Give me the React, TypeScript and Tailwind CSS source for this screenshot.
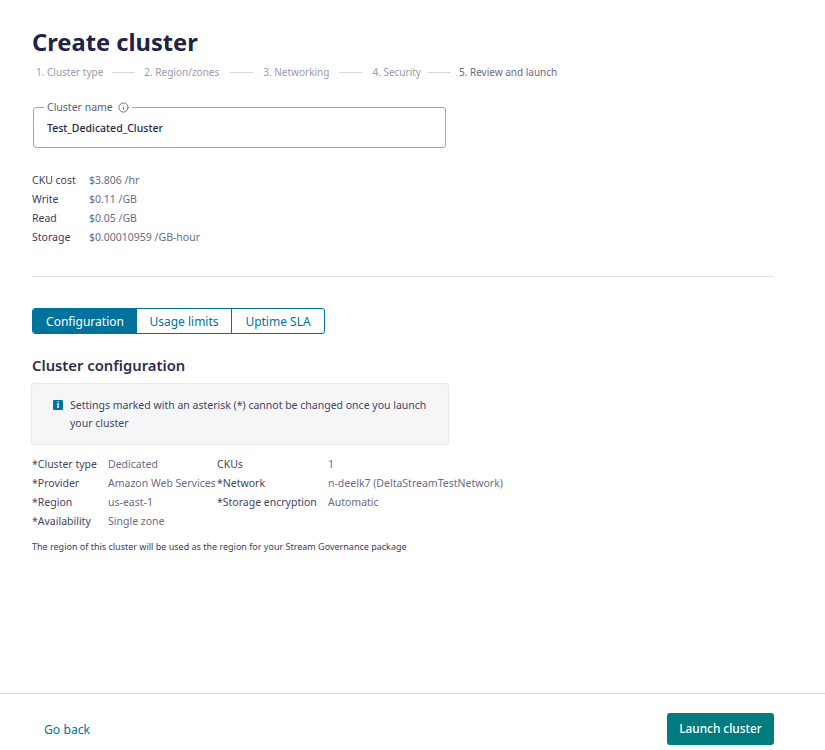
import { Info } from "lucide-react";

const steps = [
  { label: "1. Cluster type", gap: "w-[41px]" },
  { label: "2. Region/zones", gap: "w-[44px]" },
  { label: "3. Networking", gap: "w-[43px]" },
  { label: "4. Security", gap: "w-[38px]" },
];

const costs = [
  ["CKU cost", "$3.806 /hr"],
  ["Write", "$0.11 /GB"],
  ["Read", "$0.05 /GB"],
  ["Storage", "$0.00010959 /GB-hour"],
];

const configLeft = [
  ["*Cluster type", "Dedicated"],
  ["*Provider", "Amazon Web Services"],
  ["*Region", "us-east-1"],
  ["*Availability", "Single zone"],
];

const configRight = [
  ["CKUs", "1"],
  ["*Network", "n-deelk7 (DeltaStreamTestNetwork)"],
  ["*Storage encryption", "Automatic"],
];

export default function App() {
  return (
    <div className="flex h-[750px] w-[825px] flex-col overflow-hidden bg-white font-['Noto_Sans',sans-serif] text-[#26264a]">
      <main className="flex-1 pl-8 pr-[51px] pt-[24px]">
        <h1 className="text-[23.7px] font-bold leading-[36px] text-[#222247]">Create cluster</h1>

        <div className="mt-[3px] flex h-[18px] items-center pl-1 text-[10px] text-[#9a9aae]">
          {steps.map((step) => (
            <div key={step.label} className="flex items-center">
              <span>{step.label}</span>
              <span className={`flex justify-center ${step.gap}`}>
                <span className="h-px w-[23px] bg-[#d8d8e0]" />
              </span>
            </div>
          ))}
          <span className="text-[#6b6b85]">5. Review and launch</span>
        </div>

        <fieldset className="ml-px mt-[21px] h-[46px] w-[413px] rounded-[3px] border border-[#a5a5b8] px-[10px]">
          <legend className="flex items-center gap-[5px] px-[3px] text-[10.5px] leading-[11px] text-[#5c5c78]">
            Cluster name
            <Info size={11} strokeWidth={1.5} className="text-[#3c3c5c]" />
          </legend>
          <div className="mt-[7px] pl-[3px] text-[10.5px] font-medium leading-[16px] text-[#26264a]">Test_Dedicated_Cluster</div>
        </fieldset>

        <div className="mt-[23px] grid grid-cols-[57px_1fr] text-[10.5px] leading-[19px]">
          {costs.map(([label, value]) => (
            <div key={label} className="contents">
              <span className="text-[#3c3c5c]">{label}</span>
              <span className="text-[#6b6b85]">{value}</span>
            </div>
          ))}
        </div>

        <hr className="mt-[29px] border-[#e0e0e0]" />

        <div className="mt-[31px] flex h-[26px] w-fit overflow-hidden rounded-[3px] border border-[#00739d] text-[12px] text-[#00739d]">
          <button className="w-[104px] bg-[#00739d] pt-px text-white">Configuration</button>
          <button className="w-[95px] border-r border-[#00739d] pt-px">Usage limits</button>
          <button className="w-[92px] pt-px">Uptime SLA</button>
        </div>

        <h2 className="mt-[19px] text-[14.8px] font-semibold leading-[24px] text-[#2e2e4d]">Cluster configuration</h2>

        <div className="-ml-px mt-[6px] flex h-[62px] w-[418px] gap-[7px] rounded-[3px] border border-[#e8e8ee] bg-[#f6f6f9] pl-[21px] pr-4 pt-[12px] text-[10.5px] leading-[18px] text-[#44445f]">
          <span className="mt-[4px] flex h-[10px] w-[10px] shrink-0 items-center justify-center rounded-[1px] bg-[#00739d] text-[8px] font-bold leading-none text-white">i</span>
          <p>Settings marked with an asterisk (*) cannot be changed once you launch your cluster</p>
        </div>

        <div className="mt-[10px] flex text-[10.5px] leading-[19px]">
          <div className="grid w-[185px] shrink-0 grid-cols-[76px_1fr]">
            {configLeft.map(([label, value]) => (
              <div key={label} className="contents">
                <span className="text-[#44445f]">{label}</span>
                <span className="whitespace-nowrap text-[#6b6b85]">{value}</span>
              </div>
            ))}
          </div>
          <div className="grid h-fit grid-cols-[111px_1fr]">
            {configRight.map(([label, value]) => (
              <div key={label} className="contents">
                <span className="text-[#44445f]">{label}</span>
                <span className="whitespace-nowrap text-[#6b6b85]">{value}</span>
              </div>
            ))}
          </div>
        </div>

        <p className="mt-[9px] text-[9px] leading-[14px] text-[#3c3c5c]">
          The region of this cluster will be used as the region for your Stream Governance package
        </p>
      </main>

      <footer className="flex h-[57px] items-start justify-between border-t border-[#e0e0e0] pl-[44px] pr-[51px] pt-[19px]">
        <a className="mt-[8px] text-[12.2px] leading-[18px] text-[#00739d]">Go back</a>
        <button className="h-[32px] w-[107px] rounded-[3px] bg-[#007c80] text-[11.8px] font-medium text-white">Launch cluster</button>
      </footer>
    </div>
  );
}
